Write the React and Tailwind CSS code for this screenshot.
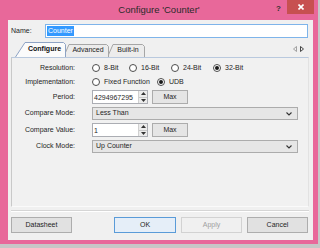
import React from "react";

function Radio({ checked }) {
  return (
    <span className="relative w-[8px] h-[8px] rounded-full border border-[#4d4d4d] bg-white shrink-0 flex items-center justify-center">
      {checked && <span className="w-[4px] h-[4px] rounded-full bg-[#1a1a1a]" />}
    </span>
  );
}

function Opt({ label, checked, w }) {
  return (
    <div className="flex items-center gap-[4px] shrink-0" style={{ width: w }}>
      <Radio checked={checked} />
      <span>{label}</span>
    </div>
  );
}

function Spin({ value }) {
  return (
    <div className="flex w-[56px] h-[14px] border border-[#abadb3] bg-white">
      <div className="flex-1 flex items-center pl-[1px] leading-none">{value}</div>
      <div className="w-[9px] flex flex-col border-l border-[#d0d0d0] bg-[#ececec]">
        <div className="flex-1 flex items-center justify-center border-b border-[#c8c8c8]">
          <svg width="5" height="3" viewBox="0 0 5 3"><path d="M0 3 L2.5 0 L5 3Z" fill="#333" /></svg>
        </div>
        <div className="flex-1 flex items-center justify-center">
          <svg width="5" height="3" viewBox="0 0 5 3"><path d="M0 0 L2.5 3 L5 0Z" fill="#333" /></svg>
        </div>
      </div>
    </div>
  );
}

function MaxBtn() {
  return (
    <div className="ml-[4px] w-[36px] h-[14px] border border-[#acacac] bg-[#e5e5e5] flex items-center justify-center">
      Max
    </div>
  );
}

function Select({ value }) {
  return (
    <div className="w-[206px] h-[13px] border border-[#acacac] bg-[#e6e6e6] flex items-center pl-[3px] pr-[5px]">
      <span className="flex-1">{value}</span>
      <svg width="6" height="4" viewBox="0 0 6 4"><path d="M0.5 0.5 L3 3 L5.5 0.5" stroke="#333" strokeWidth="1.1" fill="none" /></svg>
    </div>
  );
}

function Row({ label, h, mt, children }) {
  return (
    <div className="flex items-center" style={{ height: h, marginTop: mt }}>
      <div className="w-[63px] text-right shrink-0">{label}</div>
      <div className="ml-[17px] flex items-center">{children}</div>
    </div>
  );
}

function Tab({ label, w, h, slant, active, z, ml }) {
  const d = `M0.5 ${h} L${slant} 0.5 L${w - 2.5} 0.5 L${w - 0.5} 2.5 L${w - 0.5} ${h}`;
  return (
    <div className="relative shrink-0 flex items-center justify-center" style={{ width: w, height: h, zIndex: z, marginLeft: ml }}>
      <svg className="absolute inset-0" width={w} height={h + 1} viewBox={`0 0 ${w} ${h + 1}`}>
        <path d={d + " Z"} fill={active ? "#fbfbfb" : "#ececec"} stroke="none" />
        <path d={d} fill="none" stroke={active ? "#8ea3c4" : "#a6a6a6"} strokeWidth="1" />
      </svg>
      <span className={"relative " + (active ? "font-bold text-[#111]" : "text-[#222]")} style={{ paddingLeft: slant - 2 }}>
        {label}
      </span>
    </div>
  );
}

export default function App() {
  return (
    <div className="w-[320px] h-[248px] bg-[#c7c7c7] overflow-hidden font-['Liberation_Sans',Arial,sans-serif] text-[7px] text-[#1e1e1e]">
      <div className="w-[318px] h-[244px] bg-[#e8689a] flex flex-col">
        <div className="relative h-[20px] flex items-center justify-center shrink-0">
          <span className="text-[9.5px] text-[#2a2a2a]">Configure 'Counter'</span>
          <span className="absolute left-[276px] top-[3px] text-[8px] font-bold text-[#333]">?</span>
          <div className="absolute left-[287px] top-0 w-[27px] h-[14px] bg-[#c75050] flex items-center justify-center">
            <svg width="6" height="6" viewBox="0 0 6 6"><path d="M0.5 0.5 L5.5 5.5 M5.5 0.5 L0.5 5.5" stroke="#fff" strokeWidth="1.6" /></svg>
          </div>
        </div>
        <div className="flex-1 ml-[8px] mr-[5px] mb-[4px] bg-[#f0f0f0] flex flex-col">
          <div className="mt-[4px] h-[14px] flex items-center">
            <span className="pl-[3px] w-[37px]">Name:</span>
            <div className="w-[263px] h-[14px] border border-[#7eb4ea] bg-white flex items-center pl-[1px]">
              <span className="bg-[#3399ff] text-white px-[1px] leading-[10px]">Counter</span>
            </div>
          </div>
          <div className="mt-[4px] h-[15px] flex items-end relative">
            <div className="ml-[7px] flex items-end">
              <Tab label="Configure" w={51} h={15} slant={10} active z={3} ml={0} />
              <Tab label="Advanced" w={46} h={13} slant={6} z={2} ml={-3} />
              <Tab label="Built-in" w={38} h={13} slant={6} z={1} ml={-2} />
            </div>
            <div className="absolute right-[9px] top-[4px] flex gap-[3px]">
              <svg width="4" height="6" viewBox="0 0 4 6"><path d="M3.5 0.5 L0.5 3 L3.5 5.5Z" fill="none" stroke="#999" strokeWidth="0.9" /></svg>
              <svg width="4" height="6" viewBox="0 0 4 6"><path d="M0.5 0.5 L3.5 3 L0.5 5.5Z" fill="none" stroke="#333" strokeWidth="0.9" /></svg>
            </div>
          </div>
          <div className="ml-[3px] w-[298px] h-[150px] border border-[#c9c9c9] border-t-[#b9c9de] border-r-[#e2e2e2] border-b-[#fafafa] bg-[#f1f1f1] flex flex-col pt-[4px]">
            <Row label="Resolution:" h={12} mt={0}>
              <Opt label="8-Bit" w={37} />
              <Opt label="16-Bit" w={42} />
              <Opt label="24-Bit" w={42} />
              <Opt label="32-Bit" w={40} checked />
            </Row>
            <Row label="Implementation:" h={12} mt={2}>
              <Opt label="Fixed Function" w={65} />
              <Opt label="UDB" w={40} checked />
            </Row>
            <Row label="Period:" h={14} mt={2}>
              <Spin value="4294967295" />
              <MaxBtn />
            </Row>
            <Row label="Compare Mode:" h={13} mt={3}>
              <Select value="Less Than" />
            </Row>
            <Row label="Compare Value:" h={14} mt={3}>
              <Spin value="1" />
              <MaxBtn />
            </Row>
            <Row label="Clock Mode:" h={13} mt={3}>
              <Select value="Up Counter" />
            </Row>
          </div>
          <div className="mt-[3px] ml-[3px] w-[298px] h-[2px] border-t border-[#d5d5d5] border-b border-b-white" />
          <div className="mt-[5px] h-[16px] flex pr-[5px]">
            <div className="ml-[3px] w-[61px] h-[16px] border border-[#adadad] bg-[#e1e1e1] flex items-center justify-center">Datasheet</div>
            <div className="flex-1" />
            <div className="w-[62px] h-[16px] border border-[#5a9bd8] bg-[#e5eef8] flex items-center justify-center">OK</div>
            <div className="ml-[5px] w-[61px] h-[16px] border border-[#d2d2d2] bg-[#f0f0f0] text-[#a0a0a0] flex items-center justify-center">Apply</div>
            <div className="ml-[5px] w-[61px] h-[16px] border border-[#adadad] bg-[#e1e1e1] flex items-center justify-center">Cancel</div>
          </div>
        </div>
      </div>
    </div>
  );
}
